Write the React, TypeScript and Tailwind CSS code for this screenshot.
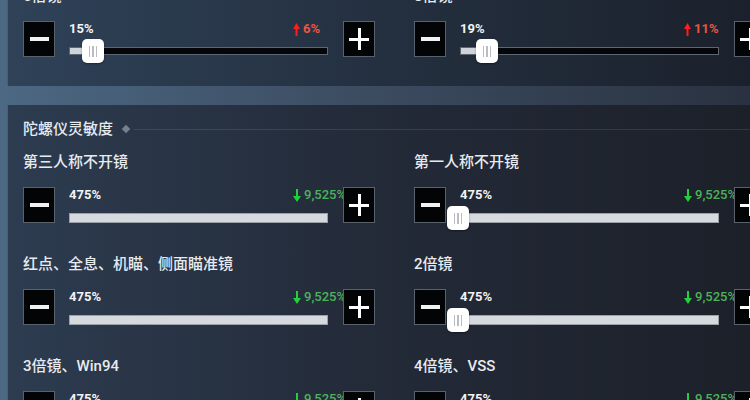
import React from 'react';

type Trend = 'up' | 'down';

interface Setting {
  label: string;
  value: string;
  delta: string;
  trend: Trend;
  dark?: boolean;
  thumb?: number;
}

const topRow: Setting[] = [
  { label: '6倍镜', value: '15%', delta: '6%', trend: 'up', dark: true, thumb: 12 },
  { label: '8倍镜', value: '19%', delta: '11%', trend: 'up', dark: true, thumb: 15 },
];

const gyroRows: Setting[] = [
  { label: '第三人称不开镜', value: '475%', delta: '9,525%', trend: 'down' },
  { label: '第一人称不开镜', value: '475%', delta: '9,525%', trend: 'down', thumb: -14 },
  { label: '红点、全息、机瞄、侧面瞄准镜', value: '475%', delta: '9,525%', trend: 'down' },
  { label: '2倍镜', value: '475%', delta: '9,525%', trend: 'down', thumb: -14 },
  { label: '3倍镜、Win94', value: '475%', delta: '9,525%', trend: 'down' },
  { label: '4倍镜、VSS', value: '475%', delta: '9,525%', trend: 'down', thumb: -14 },
];

const Arrow = ({ trend }: { trend: Trend }) =>
  trend === 'down' ? (
    <svg width="8" height="13" viewBox="0 0 8 13" className="shrink-0">
      <path d="M3 0h2v7h3l-4 6-4-6h3z" fill="#1fd23a" />
    </svg>
  ) : (
    <svg width="7" height="13" viewBox="0 0 7 13" className="shrink-0">
      <path d="M3.5 0L7 6H4.5v7h-2V6H0z" fill="#ff1d1d" />
    </svg>
  );

const StepButton = ({ plus }: { plus?: boolean }) => (
  <div className="relative w-8 h-9 shrink-0 bg-[#030406] border border-[#59616d] flex items-center justify-center">
    <span className={plus ? 'absolute w-[20px] h-[3px] bg-white' : 'absolute w-[19px] h-[4px] bg-[#f2f2f2]'} />
    {plus && <span className="absolute w-[3px] h-[22px] bg-white" />}
  </div>
);

const Thumb = ({ left }: { left: number }) => (
  <div
    className="absolute top-1/2 -translate-y-1/2 w-[22px] h-[24px] rounded-[5px] bg-white shadow-[0_1px_2px_rgba(0,0,0,0.4)] flex items-center justify-center gap-[2px]"
    style={{ left }}
  >
    <span className="w-[1.5px] h-[11px] bg-[#b9bdc3]" />
    <span className="w-[1.5px] h-[11px] bg-[#b9bdc3]" />
    <span className="w-[1.5px] h-[11px] bg-[#b9bdc3]" />
  </div>
);

const Slider = ({ s }: { s: Setting }) => {
  const up = s.trend === 'up';
  return (
    <div className="w-[259px] shrink-0 h-9 flex flex-col font-['Roboto',sans-serif]">
      <div className="h-[16px] flex items-center">
        <span className="text-[13px] leading-[16px] font-bold text-[#f3f4f6]">{s.value}</span>
        <div className="ml-auto w-[35px] flex items-center gap-[3px] whitespace-nowrap">
          <Arrow trend={s.trend} />
          <span className={up ? 'text-[13px] leading-[16px] font-bold text-[#e8573f]' : 'text-[13px] leading-[16px] font-medium text-[#4cb35a]'}>
            {s.delta}
          </span>
        </div>
      </div>
      <div className="flex-1" />
      {s.dark ? (
        <div className="relative h-[8px] mb-[2px] bg-[#04060a] border border-[#5e6672]">
          <div className="h-full bg-[#cfd4da]" style={{ width: (s.thumb ?? 0) + 8 }} />
          {s.thumb !== undefined && <Thumb left={s.thumb} />}
        </div>
      ) : (
        <div className="relative h-[10px] bg-[#d6dade] border border-[#9ba1a9]">
          {s.thumb !== undefined && <Thumb left={s.thumb} />}
        </div>
      )}
    </div>
  );
};

const SettingBlock = ({ s, last }: { s: Setting; last?: boolean }) => (
  <div className={last ? 'flex flex-col' : 'flex flex-col mb-[31px]'}>
    <div className="h-[20px] leading-[20px] text-[15px] text-[#e7ebef] font-medium font-['Roboto','Noto_Sans_CJK_SC',sans-serif] whitespace-nowrap">
      {s.label}
    </div>
    <div className="mt-[15px] flex items-center">
      <StepButton />
      <div className="w-[14px] shrink-0" />
      <Slider s={s} />
      <div className="w-[15px] shrink-0" />
      <StepButton plus />
    </div>
  </div>
);

export default function App() {
  return (
    <div className="w-[750px] h-[400px] overflow-hidden pl-[7px] bg-linear-to-r from-[#4c6883] via-[#3b4b60] to-[#2a3241] font-['Roboto','Noto_Sans_CJK_SC',sans-serif]">
      <div className="-mt-[14px] pl-[15px] pb-[29px] overflow-hidden bg-linear-to-r from-[#2f4258] via-[#243040] to-[#1b212c] border-l border-[#4a5f77]">
        <div className="grid grid-cols-[391px_391px]">
          {topRow.map((s) => (
            <SettingBlock key={s.label} s={s} last />
          ))}
        </div>
      </div>

      <div className="mt-[19px] pt-[14px] pl-[15px] h-[320px] overflow-hidden bg-linear-to-r from-[#2d3c50] via-[#232a38] to-[#1c2029] border-l border-[#4a5f77]">
        <div className="h-[20px] flex items-center">
          <span className="text-[15px] leading-[20px] font-medium text-[#e7ebef]">陀螺仪灵敏度</span>
          <span className="ml-[10px] w-[6px] h-[6px] rotate-45 bg-[#76818f]" />
          <span className="ml-[5px] flex-1 h-px bg-white/10" />
        </div>
        <div className="mt-[13px] grid grid-cols-[391px_391px]">
          {gyroRows.map((s) => (
            <SettingBlock key={s.label} s={s} />
          ))}
        </div>
      </div>
    </div>
  );
}
